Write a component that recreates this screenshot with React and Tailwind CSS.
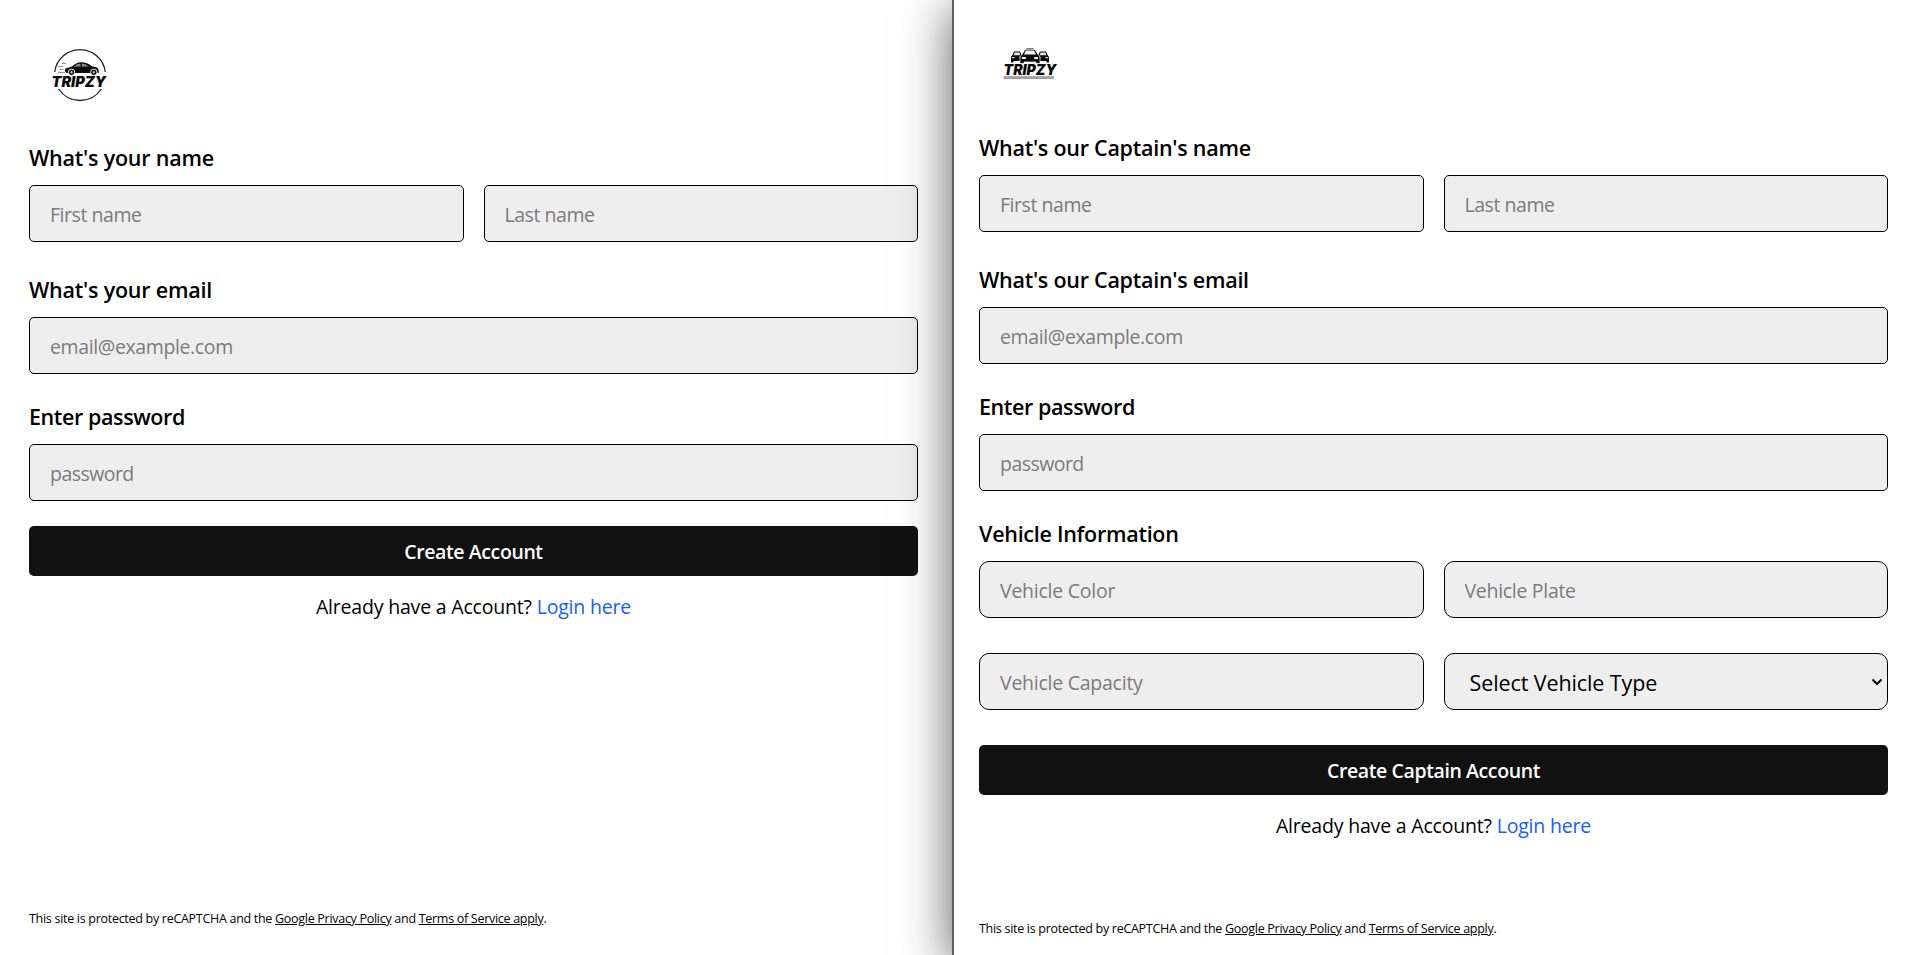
const FIELD =
  "h-[57px] w-full min-w-0 border border-black bg-[#eee] px-5 pt-px text-[19.5px] text-black placeholder:text-[#7b7b7b] outline-none";

function Heading({ children, className = "", tracking = "tracking-[-0.22px]" }) {
  return (
    <h3 className={`mb-[13px] h-7 text-[21.5px] font-semibold leading-7 text-black ${tracking} ${className}`}>
      {children}
    </h3>
  );
}

function Field({ placeholder, type = "text", rounded = "rounded-[5px]", tracking = "tracking-[-0.45px]" }) {
  return <input type={type} placeholder={placeholder} className={`${FIELD} ${rounded} ${tracking}`} />;
}

function SubmitButton({ children }) {
  return (
    <button type="button" className="flex h-[50px] w-full items-center justify-center rounded-[5px] bg-[#111] pt-0.5 text-[19.5px] font-semibold tracking-[-0.4px] text-white">
      {children}
    </button>
  );
}

function LoginLine() {
  return (
    <p className="mt-[17px] text-center text-[19.5px] leading-7 tracking-[-0.19px] text-black">
      Already have a Account? <a className="text-[#155dfc]">Login here</a>
    </p>
  );
}

function Legal() {
  return (
    <p className="text-[12.5px] leading-4 tracking-[-0.29px] text-black">
      This site is protected by reCAPTCHA and the <span className="underline">Google Privacy Policy</span> and{" "}
      <span className="underline">Terms of Service apply</span>.
    </p>
  );
}

function LogoText({ x, y, width }) {
  return (
    <text x={x} y={y} textLength={width} lengthAdjust="spacingAndGlyphs" fontFamily="Inter, 'Open Sans', sans-serif" fontSize="14.5" fontWeight="900" fontStyle="italic" fill="#0a0a0a">
      TRIPZY
    </text>
  );
}

function RiderLogo() {
  return (
    <svg width="64" height="60" viewBox="0 0 64 60" className="shrink-0">
      <path d="M4.700 27 A25.500 25.500 0 0 1 55.300 27" fill="none" stroke="#222" strokeWidth="1.3" />
      <path d="M8.700 44 A25.500 25.500 0 0 0 51.300 44" fill="none" stroke="#222" strokeWidth="1.3" />
      <path d="M15.500 23.500 L22 21.500 Q26 17.500 31 17.300 Q37 17.200 42 21.200 L47 22.500 Q49.500 24.500 48.500 28 H16.500 L14.800 26 Z" fill="#0a0a0a" />
      <path d="M24 21.600 Q27 18.800 30.500 18.600 V21.600 Z M31.800 18.600 Q35.500 18.600 38.500 21.500 L31.800 21.700 Z" fill="#888" />
      <path d="M12 18.500 H16 M8 21.500 H13 M10 24.500 H13.500 M8 27.500 H15" stroke="#777" strokeWidth=".8" />
      <circle cx="21.500" cy="27.300" r="3.200" fill="#0a0a0a" stroke="#fff" strokeWidth=".9" />
      <circle cx="43.800" cy="27.300" r="3.200" fill="#0a0a0a" stroke="#fff" strokeWidth=".9" />
      <circle cx="21.500" cy="27.300" r="1.200" fill="#bbb" />
      <circle cx="43.800" cy="27.300" r="1.200" fill="#bbb" />
      <LogoText x={1.5} y={42} width={54.5} />
    </svg>
  );
}

function SmallCab({ x }) {
  return (
    <g transform={`translate(${x} 1)`}>
      <path d="M3 3.500 H9 L10.500 7 Q12 8 12 10 V14.500 H9.500 V13 H2.500 V14.500 H0 V10 Q0 8 1.500 7 Z" fill="#0a0a0a" />
      <path d="M3.600 4.600 H8.400 L9.400 7.200 H2.600 Z M1.200 9 H3.500 V10.300 H1.200 Z M8.500 9 H10.800 V10.300 H8.500 Z" fill="#e6e6e6" />
    </g>
  );
}

function CaptainLogo() {
  return (
    <svg width="64" height="34" viewBox="0 0 64 34" className="shrink-0">
      <SmallCab x={9} />
      <SmallCab x={35} />
      <g transform="translate(1 0)">
        <path d="M22 2.500 H32 L35 7.500 Q37 8.500 37 11 V16.500 H33 V15 H21 V16.500 H17 V11 Q17 8.500 19 7.500 Z" fill="#0a0a0a" stroke="#fff" strokeWidth=".7" />
        <path d="M23.500 1 H30.500 V2.500 H23.500 Z" fill="#777" />
        <path d="M22.800 3.500 H31.200 L33 7.500 H21 Z M19 10 H22.800 V12 H19 Z M31.200 10 H35 V12 H31.200 Z" fill="#f2f2f2" />
      </g>
      <LogoText x={1.5} y={28} width={53} />
      <path d="M1.500 30 H52" stroke="#555" strokeWidth="1" />
      <path d="M1.500 31.500 H52" stroke="#999" strokeWidth="1" />
    </svg>
  );
}

function RiderSignup() {
  return (
    <section className="flex h-full w-[952px] flex-col pb-7 pl-[29px] pr-[34px] pt-[45px]">
      <div className="mb-[39px] flex h-[60px] pl-[21px]">
        <RiderLogo />
      </div>
      <Heading>What's your name</Heading>
      <div className="mb-[34px] grid grid-cols-2 gap-5">
        <Field placeholder="First name" />
        <Field placeholder="Last name" />
      </div>
      <Heading>What's your email</Heading>
      <Field type="email" placeholder="email@example.com" tracking="tracking-[-0.38px]" />
      <Heading className="mt-[29px]" tracking="tracking-[-0.4px]">Enter password</Heading>
      <Field type="password" placeholder="password" tracking="tracking-[-0.55px]" />
      <div className="mt-[25px]">
        <SubmitButton>Create Account</SubmitButton>
      </div>
      <LoginLine />
      <div className="mt-auto">
        <Legal />
      </div>
    </section>
  );
}

function CaptainSignup() {
  return (
    <section className="relative flex h-full w-[960px] flex-col border-l-2 border-[#606060] bg-white pb-[18px] pl-[25px] pr-6 pt-[47px] shadow-[0_10px_46px_1px_rgba(0,0,0,0.62)]">
      <div className="mb-[53px] flex h-[34px] pl-[23px]">
        <CaptainLogo />
      </div>
      <Heading tracking="tracking-[-0.26px]">What's our Captain's name</Heading>
      <div className="mb-[34px] grid grid-cols-2 gap-5">
        <Field placeholder="First name" />
        <Field placeholder="Last name" />
      </div>
      <Heading tracking="tracking-[-0.26px]">What's our Captain's email</Heading>
      <Field type="email" placeholder="email@example.com" tracking="tracking-[-0.38px]" />
      <Heading className="mt-[29px]" tracking="tracking-[-0.4px]">Enter password</Heading>
      <Field type="password" placeholder="password" tracking="tracking-[-0.55px]" />
      <Heading className="mt-[29px]" tracking="tracking-[-0.27px]">Vehicle Information</Heading>
      <div className="mb-[35px] grid grid-cols-2 gap-x-5 gap-y-[35px]">
        <Field placeholder="Vehicle Color" rounded="rounded-[10px]" tracking="tracking-[-0.25px]" />
        <Field placeholder="Vehicle Plate" rounded="rounded-[10px]" tracking="tracking-[-0.3px]" />
        <Field placeholder="Vehicle Capacity" rounded="rounded-[10px]" tracking="tracking-[-0.25px]" />
        <div className="flex h-[57px] items-center justify-between rounded-[10px] border border-black bg-[#eee] pl-[25px] pr-1">
          <span className="pt-[3px] text-[21.5px] tracking-[-0.1px] text-black">Select Vehicle Type</span>
          <svg width="12" height="12" viewBox="0 0 12 12">
            <path d="M1.500 3.500 L6 8 L10.500 3.500" fill="none" stroke="#000" strokeWidth="2" />
          </svg>
        </div>
      </div>
      <SubmitButton>Create Captain Account</SubmitButton>
      <LoginLine />
      <div className="mt-auto">
        <Legal />
      </div>
    </section>
  );
}

export default function App() {
  return (
    <main className="flex h-[955px] w-[1912px] overflow-hidden bg-white font-['Open_Sans','Noto_Sans',sans-serif]">
      <RiderSignup />
      <CaptainSignup />
    </main>
  );
}
